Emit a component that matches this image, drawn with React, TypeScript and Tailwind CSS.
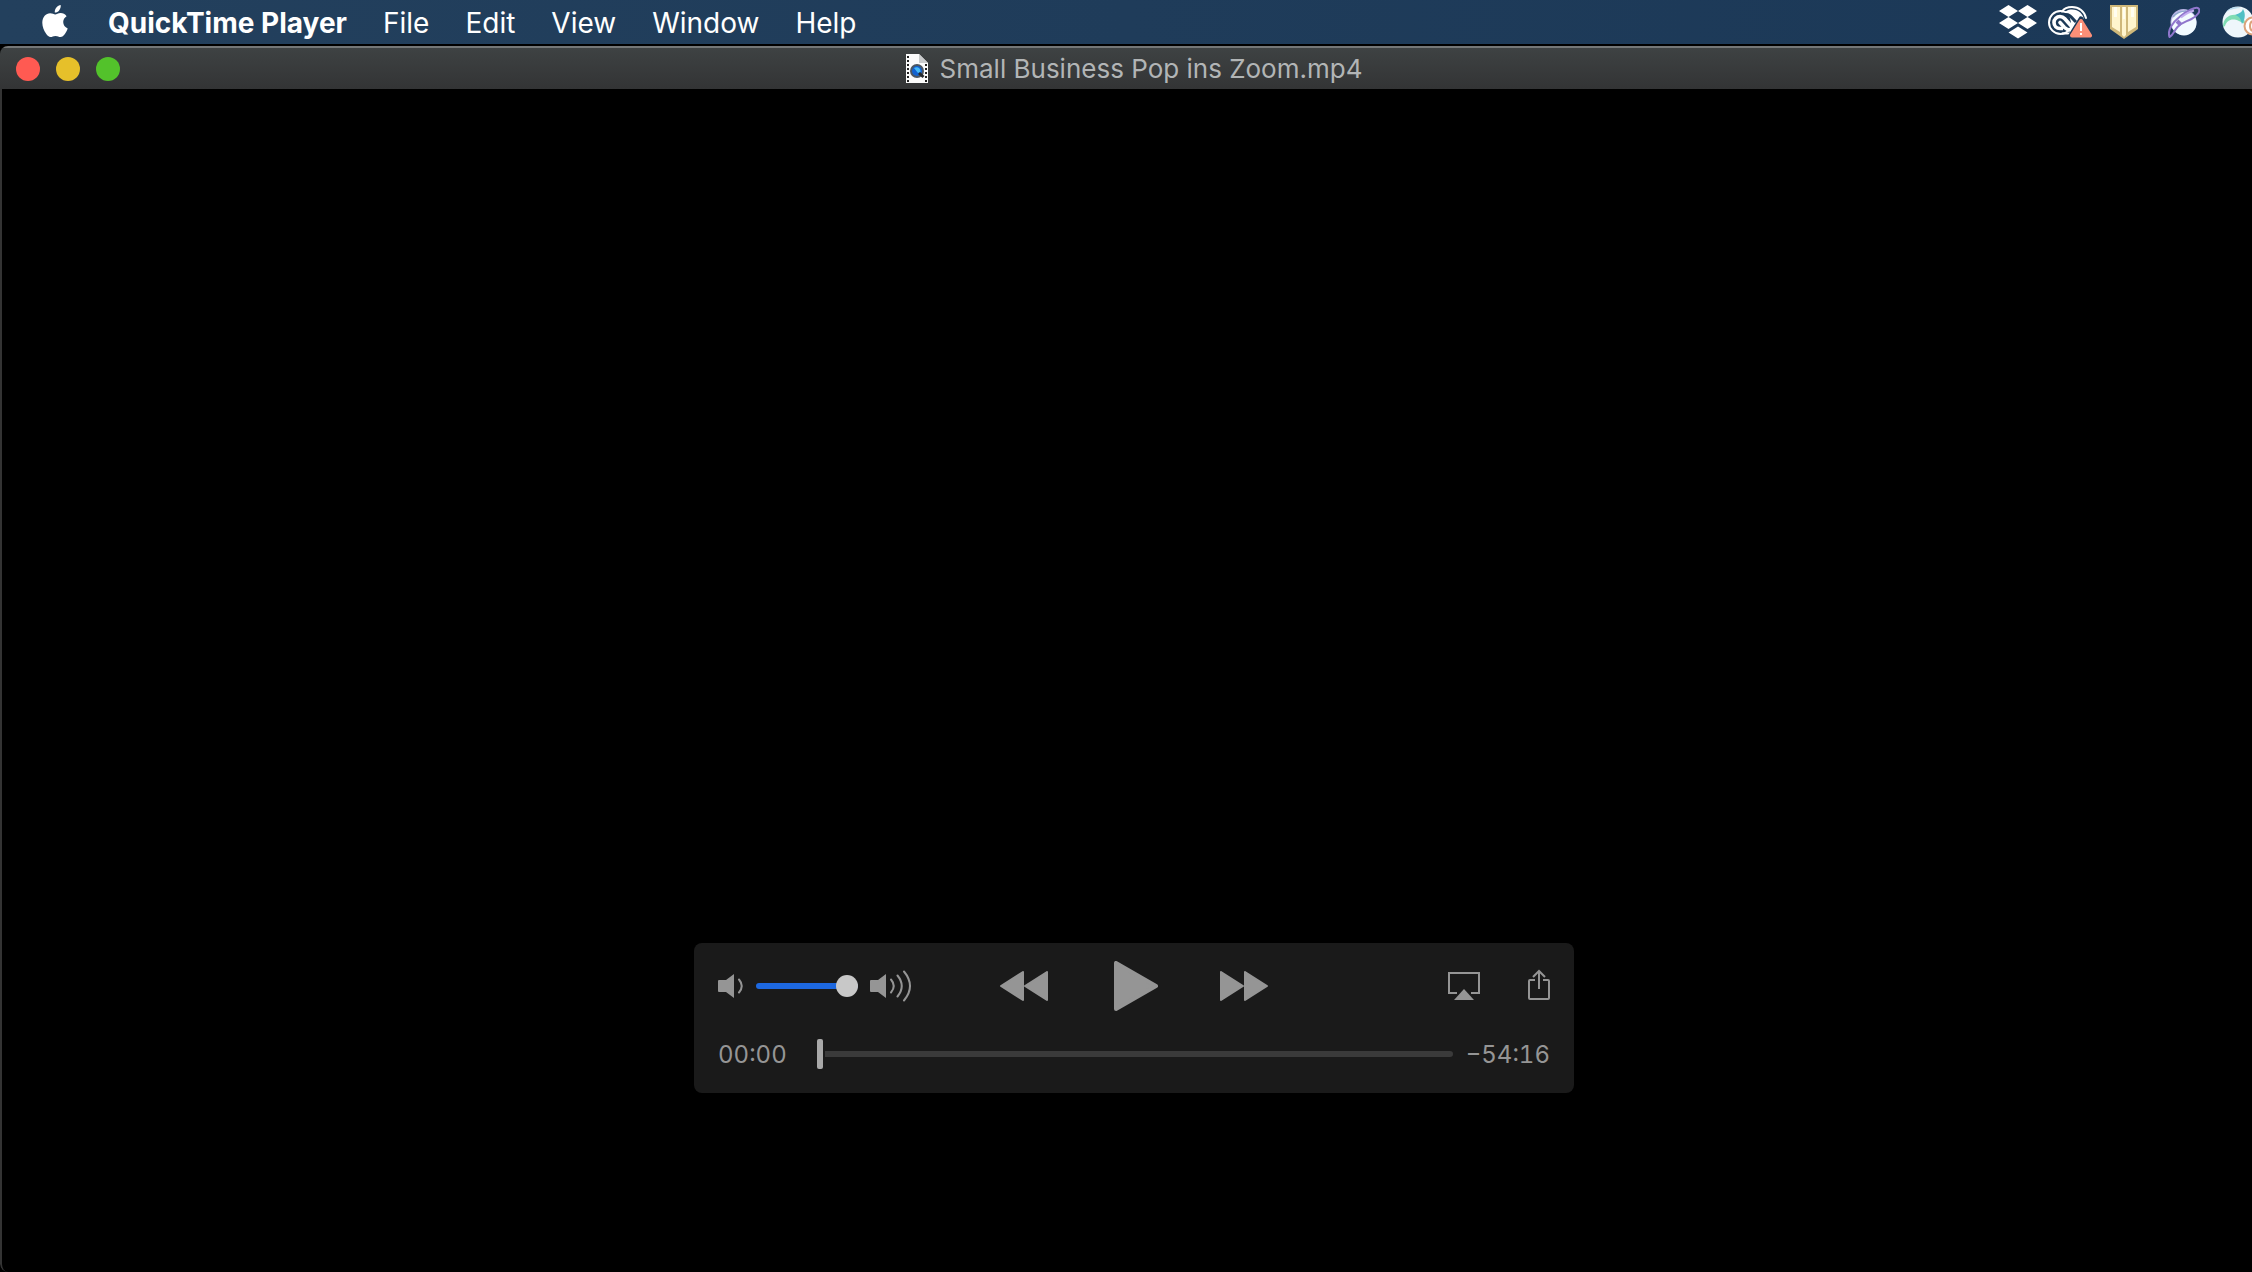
import { useState } from "react";

const MENUS = ["File", "Edit", "View", "Window", "Help"];

function AppleLogo() {
  return (
    <svg viewBox="0 0 26 32" className="h-8 w-[26px]" fill="#fff" aria-hidden="true">
      <path d="M18.7 0c.3 2.100-.5 4-1.600 5.400C16 6.800 14.300 7.700 12.800 7.600c-.3-2 .6-4 1.600-5.200C15.500 1 17.300.100 18.700 0z" />
      <path d="M13.200 9.400c1.200 0 3-1.400 5.400-1.400 2.300 0 4.600 1.200 6 3.200-2.200 1.400-3.400 3.500-3.400 5.900 0 2.900 1.800 5.300 4.500 6.400-.5 1.700-1.600 3.900-3 5.800-1.200 1.600-2.400 2.700-4.200 2.700-1.900 0-2.600-1.100-5-1.100s-3.200 1.100-5 1.100c-1.700 0-3-1.300-4.200-2.900C2 26 .3 21.800.3 17.800c0-5.900 3.700-9.600 7.800-9.600 2.200 0 4 1.200 5.100 1.200z" />
    </svg>
  );
}

function DropboxIcon() {
  return (
    <svg viewBox="0 0 38 34" className="h-[34px] w-[38px]" fill="#fff" aria-hidden="true">
      <path d="M9.500 0 19 6l-9.500 6L0 6zM28.500 0 38 6l-9.500 6L19 6zM9.500 12l9.500 6-9.500 6L0 18zM28.500 12l9.500 6-9.500 6-9.500-6zM19 21.500l9.500 6L19 33.500l-9.500-6z" />
    </svg>
  );
}

function CreativeCloudIcon() {
  return (
    <svg viewBox="0 0 44 32" className="h-8 w-11" fill="none" aria-hidden="true">
      <path d="M14 9C16 5.500 20 3.500 24 3.500c6.500 0 11.500 4.500 12 11L30 26H22z" fill="#fff" />
      <circle cx="12.500" cy="16.500" r="11.500" fill="#1c3957" stroke="#fff" strokeWidth="2" />
      <path d="M14 5.500C16 2.500 20 1 24 1c7 0 12.500 4.500 14 11" stroke="#fff" strokeWidth="2" strokeLinecap="round" />
      <path d="M17 8.500C22 8 24 12 28 16" stroke="#1c3957" strokeWidth="3" />
      <path d="M15 22.500h-3c-3.500 0-6-2.700-6-6s2.700-6 6-6c2 0 3.500.8 4.800 2.300L25 22" stroke="#fff" strokeWidth="3.600" />
      <path d="M12 16.500l4.500 5c1.500 1.500 3.500 2.500 6 2.500" stroke="#fff" strokeWidth="3.600" strokeLinecap="round" />
      <path d="M14 27.500h10" stroke="#fff" strokeWidth="2" />
      <path d="M33 13 43 31H22z" fill="#1c3957" stroke="#1c3957" strokeWidth="5" strokeLinejoin="round" />
      <path d="M33 15 42 29.500H24z" fill="#fb8f78" stroke="#fb8f78" strokeWidth="4" strokeLinejoin="round" />
      <path d="M33 17v8M33 27v2" stroke="#fff" strokeWidth="2" />
    </svg>
  );
}

function ShieldIcon() {
  return (
    <svg viewBox="0 0 28 34" className="h-[34px] w-7" aria-hidden="true">
      <path d="M0 0h28v24L14 34 0 24z" fill="#cfb87a" />
      <path d="M2 2h8v25L2 22zM12 2h4v28l-2 2-2-2zM18 2h8v20l-8 5z" fill="#fff5cd" />
      <path d="M4 2h3v10H4zM13 2h2v12h-2zM21 2h3v10h-3z" fill="#fffdf0" />
    </svg>
  );
}

function PlanetIcon() {
  return (
    <svg viewBox="0 0 32 32" className="h-8 w-8" fill="none" aria-hidden="true">
      <circle cx="15.500" cy="16" r="13" fill="#b9b4e6" />
      <circle cx="16" cy="17" r="12.500" fill="#f2fbff" />
      <path d="M5 11C8 7 13 5 18 5" stroke="#8fa6cf" strokeWidth="1.500" />
      <path d="M1.500 31C-1 24 5 16 12 10.500S28 0 30.500 2.500s-1 7.500-7 10.500-10 3.500-14 8-4 8-8 10z" stroke="#8f76cc" strokeWidth="2" strokeLinejoin="round" />
      <path d="M13 11.500c4-3 9-6 13-7" stroke="#c3aef0" strokeWidth="2" />
      <path d="M9 15l4 4" stroke="#8f76cc" strokeWidth="4" />
    </svg>
  );
}

function GlobeIcon() {
  return (
    <svg viewBox="0 0 46 32" className="h-8 w-[46px]" fill="none" aria-hidden="true">
      <circle cx="16" cy="16" r="15.500" fill="#eef6fb" />
      <path d="M1 21C1 12 8 7 17 9.500c4 1.300 6 4 6 8.500l-6-3C10 12 5 14 3 20z" fill="#7fdcb4" />
      <path d="M13 9c5-2 7-3 8-6 3 5 2 10-1 15-1-5-3-8-7-9z" fill="#4fbfc4" />
      <path d="M4 6c4-5 10-6 15-4-5 0-10 1-15 4z" fill="#b9dcf0" />
      <circle cx="31" cy="20" r="8.500" fill="#fff" stroke="#dca27a" strokeWidth="2" />
      <path d="M31 15c-4 1-4 9 0 10" stroke="#dca27a" strokeWidth="2" />
    </svg>
  );
}

function MovieFileIcon() {
  return (
    <svg viewBox="0 0 22 29" className="h-[29px] w-[22px]" aria-hidden="true">
      <path d="M0 0h13l9 9v20H0z" fill="#fbfbfb" />
      <path d="M13 0v9h9z" fill="#c9cbcc" />
      <path d="M2 2v26M20 10v18" stroke="#222" strokeWidth="2" strokeDasharray="2 2" />
      <circle cx="11" cy="17" r="7" fill="#4b5560" />
      <circle cx="11" cy="17" r="5" fill="#1161cf" />
      <path d="M8 14c3-2 7 0 6.500 4L12 19z" fill="#45b9f6" />
      <path d="M13 19l4.500 4" stroke="#25282b" strokeWidth="3" />
    </svg>
  );
}

function Speaker({ loud = false }: { loud?: boolean }) {
  return (
    <svg viewBox={loud ? "0 0 42 32" : "0 0 26 32"} className={loud ? "h-8 w-[42px]" : "h-8 w-[26px]"} fill="none" aria-hidden="true">
      <path d="M1 10h7l8-6v24l-8-6H1q-1 0-1-1V11q0-1 1-1z" fill="#959595" />
      <g stroke="#959595" strokeWidth="2" strokeLinecap="round">
        <path d="M21 9.500q5.500 6.500 0 13" />
        {loud && <path d="M27.500 5.500q8.500 10.500 0 21M34 1.500q12 14.500 0 29" />}
      </g>
    </svg>
  );
}

function SkipIcon({ back = false }: { back?: boolean }) {
  return (
    <svg viewBox="0 0 48 30" className="h-[30px] w-12" fill="#959595" stroke="#959595" strokeWidth="2" strokeLinejoin="round" aria-hidden="true">
      {back ? <path d="M23 1v28L1 15zM47 1v28L25 15z" /> : <path d="M1 1v28l22-14zM25 1v28l22-14z" />}
    </svg>
  );
}

function MenuBar() {
  return (
    <header className="flex h-[46px] shrink-0 items-center justify-between overflow-hidden border-b-2 border-black bg-gradient-to-r from-[#23405d] to-[#1b3857] pl-[42px]">
      <nav className="flex items-center gap-9 pt-px text-[28px] leading-9 text-white">
        <button aria-label="Apple menu" className="mr-1 -mt-1"><AppleLogo /></button>
        <button className="font-bold">QuickTime Player</button>
        {MENUS.map((m) => (
          <button key={m}>{m}</button>
        ))}
      </nav>
      <div className="-mr-4 flex shrink-0 items-center">
        <button aria-label="Dropbox" className="mr-[11px]"><DropboxIcon /></button>
        <button aria-label="Creative Cloud" className="mr-[18px]"><CreativeCloudIcon /></button>
        <button aria-label="Shield" className="mr-[30px]"><ShieldIcon /></button>
        <button aria-label="Planet" className="mr-[22px]"><PlanetIcon /></button>
        <button aria-label="Globe"><GlobeIcon /></button>
      </div>
    </header>
  );
}

function TitleBar() {
  return (
    <div className="grid h-[43px] shrink-0 grid-cols-[1fr_auto_1fr] items-center border-t-2 border-[#747778] bg-gradient-to-b from-[#3e4243] to-[#333435]">
      <div className="flex gap-4 pl-4">
        <button aria-label="Close" className="size-6 rounded-full bg-[#ff5a52]" />
        <button aria-label="Minimize" className="size-6 rounded-full bg-[#e6c02a]" />
        <button aria-label="Full screen" className="size-6 rounded-full bg-[#53c22b]" />
      </div>
      <div className="flex items-center gap-3">
        <MovieFileIcon />
        <h1 className="text-[26px] leading-8 text-[#b2b5b6]">Small Business Pop ins Zoom.mp4</h1>
      </div>
    </div>
  );
}

function Controls() {
  const [volume, setVolume] = useState(100);
  const [position, setPosition] = useState(0);

  return (
    <section aria-label="Playback controls" className="w-[880px] rounded-lg bg-[#1a1a1a] px-6 pt-[18px] pb-6">
      <div className="grid h-[50px] grid-cols-[1fr_auto_1fr] items-center">
        <div className="flex items-center gap-3">
          <button aria-label="Mute"><Speaker /></button>
          <input
            type="range"
            aria-label="Volume"
            value={volume}
            onChange={(e) => setVolume(Number(e.target.value))}
            style={{ backgroundSize: `${volume}% 100%` }}
            className="h-[6px] w-[102px] appearance-none rounded-full bg-[#3a3a3a] bg-[linear-gradient(#1d68e0,#1d68e0)] bg-no-repeat [&::-webkit-slider-thumb]:size-[22px] [&::-webkit-slider-thumb]:appearance-none [&::-webkit-slider-thumb]:rounded-full [&::-webkit-slider-thumb]:bg-[#c8c8c8]"
          />
          <button aria-label="Full volume"><Speaker loud /></button>
        </div>
        <div className="flex items-center gap-[62px]">
          <button aria-label="Rewind"><SkipIcon back /></button>
          <button aria-label="Play">
            <svg viewBox="0 0 48 50" className="h-[50px] w-12" aria-hidden="true">
              <path d="M6 2v46l40-23z" fill="#959595" stroke="#959595" strokeWidth="4" strokeLinejoin="round" />
            </svg>
          </button>
          <button aria-label="Fast forward"><SkipIcon /></button>
        </div>
        <div className="flex items-center justify-end gap-12">
          <button aria-label="AirPlay">
            <svg viewBox="0 0 32 28" className="h-7 w-8" fill="none" aria-hidden="true">
              <path d="M9 21H1V1h30v20h-8" stroke="#959595" strokeWidth="2" />
              <path d="M16 17l10 11H6z" fill="#959595" />
            </svg>
          </button>
          <button aria-label="Share">
            <svg viewBox="0 0 22 34" className="h-[34px] w-[22px]" fill="none" stroke="#959595" strokeWidth="2" aria-hidden="true">
              <path d="M7 11H2q-1 0-1 1v17q0 1 1 1h18q1 0 1-1V12q0-1-1-1h-5" />
              <path d="M11 20V2M5 8l6-6 6 6" />
            </svg>
          </button>
        </div>
      </div>
      <div className="mt-7 flex h-[30px] items-center text-2xl text-[#959595] tabular-nums">
        <time className="w-[99px] pt-px">00:00</time>
        <input
          type="range"
          aria-label="Position"
          value={position}
          onChange={(e) => setPosition(Number(e.target.value))}
          className="h-[6px] min-w-0 flex-1 appearance-none rounded-full bg-[#3a3a3a] [&::-webkit-slider-thumb]:h-[30px] [&::-webkit-slider-thumb]:w-[6px] [&::-webkit-slider-thumb]:appearance-none [&::-webkit-slider-thumb]:rounded-xs [&::-webkit-slider-thumb]:bg-[#a9a9a9] [&::-webkit-slider-thumb]:shadow-[0_0_0_2px_#1a1a1a]"
        />
        <time className="w-[97px] pt-px text-right">−54:16</time>
      </div>
    </section>
  );
}

export default function App() {
  return (
    <div className="flex min-h-screen flex-col overflow-hidden bg-black font-['Inter','Liberation_Sans',sans-serif]">
      <MenuBar />
      {/* the window runs a little past the right edge of the screen */}
      <main className="flex w-[calc(100%+16px)] flex-1 flex-col overflow-hidden rounded-tl-lg rounded-bl-lg">
        <TitleBar />
        <div className="flex flex-1 flex-col items-center justify-end rounded-bl-lg border-x-2 border-[#343434] bg-black pb-[179px]">
          <Controls />
        </div>
      </main>
    </div>
  );
}
